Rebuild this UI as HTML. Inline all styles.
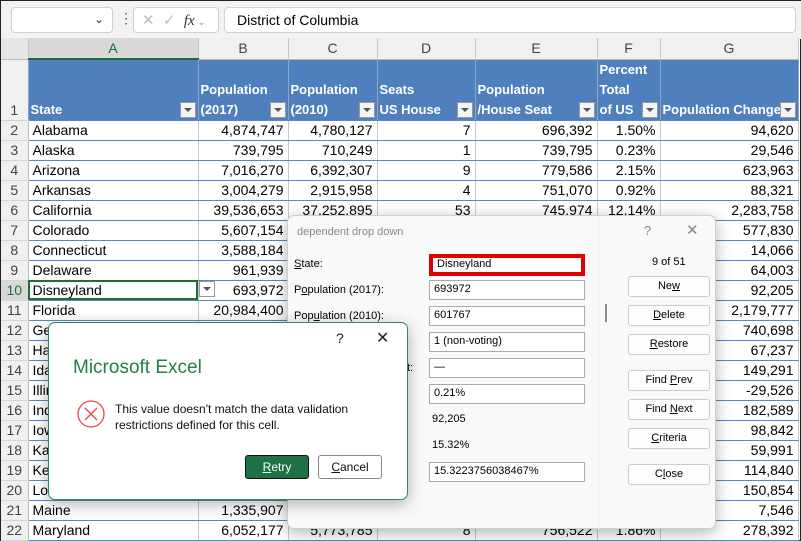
<!DOCTYPE html>
<html><head><meta charset="utf-8"><style>
*{box-sizing:border-box;margin:0;padding:0}
body{width:801px;height:541px;overflow:hidden;background:#fff;font-family:"Liberation Sans",sans-serif;position:relative;border:1px solid #222}
.fb{position:absolute;left:0;top:0;width:801px;height:38px;background:#f3f3f3}
.box{position:absolute;background:#fff;border:1px solid #d0d0d0;border-radius:4px}
table{position:absolute;left:0;top:37px;border-collapse:collapse;table-layout:fixed;font-size:14px}
td{height:20px;padding:0 4px;white-space:nowrap;overflow:hidden;border-right:1px solid #c8c8c8;border-bottom:1px solid #5b86c4;text-align:right;color:#000}
td.n{text-align:center;background:#f0f0f0;color:#444;border-bottom:1px solid #d4d4d4;border-right:1px solid #bbb;padding:0}
td.s{text-align:left}
tr.cl td{height:21px;background:#f0f0f0;color:#444;text-align:center;border-bottom:1px solid #bbb;font-size:14px}
tr.h td{height:59px;background:#4f7fbd;color:#fff;font-weight:bold;text-align:left;vertical-align:bottom;line-height:20px;position:relative;border-right:1px solid #8aa5cc;font-size:13px;padding:0 2px}
tr.h td.n{background:#f0f0f0;color:#444;font-weight:normal;text-align:center;font-size:14px}
.dd{position:absolute;right:2px;bottom:2px;width:16px;height:16px;background:#f4f4f4;border:1px solid #999}
.dd:after{content:"";position:absolute;left:3px;top:5px;border:4px solid transparent;border-top:4px solid #555}
.dlg{position:absolute;background:#fff;border:1px solid #cfcfcf;border-radius:7px;box-shadow:0 4px 16px rgba(0,0,0,.3)}
.lab{position:absolute;font-size:11px;color:#000}
.inp{position:absolute;left:141px;width:156px;height:20px;border:1px solid #aaa;font-size:11px;padding:2px 4px;background:#fff}
.btn{position:absolute;left:340px;width:82px;height:21px;border:1px solid #ccc;border-radius:3px;font-size:11px;text-align:center;line-height:19px;background:#fdfdfd}
u{text-decoration:underline}
</style></head><body>
<div class="fb">
 <div class="box" style="left:10px;top:6px;width:102px;height:26px"><span style="position:absolute;right:8px;top:4px;font-size:12px;color:#333">⌄</span></div>
 <div style="position:absolute;left:118px;top:9px;font-size:14px;color:#555">⋮</div>
 <div class="box" style="left:132px;top:6px;width:86px;height:26px;color:#bbb;font-size:15px;padding:3px 0 0 8px">✕&nbsp;&nbsp;✓&nbsp;&nbsp;<i style="color:#333;font-family:'Liberation Serif',serif">fx</i><span style="font-size:10px;color:#999"> ⌄</span></div>
 <div class="box" style="left:223px;top:6px;width:572px;height:26px;font-size:14px;padding:4px 12px;color:#000">District of Columbia</div>
</div>
<table>
<colgroup><col style="width:27px"><col style="width:170px"><col style="width:90px"><col style="width:89px"><col style="width:98px"><col style="width:122px"><col style="width:63px"><col style="width:138px"></colgroup>
<tr class="cl"><td style="background:#e6e6e6"></td><td style="background:#d8d8d8;color:#1e6e3a;border-bottom:2px solid #1e6e3a">A</td><td>B</td><td>C</td><td>D</td><td>E</td><td>F</td><td>G</td></tr>
<tr class="h"><td class="n">1</td><td>State<span class="dd"></span></td><td>Population<br>(2017)<span class="dd"></span></td><td>Population<br>(2010)<span class="dd"></span></td><td>Seats<br>US House<span class="dd"></span></td><td>Population<br>/House Seat<span class="dd"></span></td><td>Percent<br>Total<br>of US<span class="dd"></span></td><td>Population Change<span class="dd"></span></td></tr>
<tr><td class="n">2</td><td class="s">Alabama</td><td>4,874,747</td><td>4,780,127</td><td>7</td><td>696,392</td><td>1.50%</td><td>94,620</td></tr>
<tr><td class="n">3</td><td class="s">Alaska</td><td>739,795</td><td>710,249</td><td>1</td><td>739,795</td><td>0.23%</td><td>29,546</td></tr>
<tr><td class="n">4</td><td class="s">Arizona</td><td>7,016,270</td><td>6,392,307</td><td>9</td><td>779,586</td><td>2.15%</td><td>623,963</td></tr>
<tr><td class="n">5</td><td class="s">Arkansas</td><td>3,004,279</td><td>2,915,958</td><td>4</td><td>751,070</td><td>0.92%</td><td>88,321</td></tr>
<tr><td class="n">6</td><td class="s">California</td><td>39,536,653</td><td>37,252,895</td><td>53</td><td>745,974</td><td>12.14%</td><td>2,283,758</td></tr>
<tr><td class="n">7</td><td class="s">Colorado</td><td>5,607,154</td><td></td><td></td><td></td><td></td><td>577,830</td></tr>
<tr><td class="n">8</td><td class="s">Connecticut</td><td>3,588,184</td><td></td><td></td><td></td><td></td><td>14,066</td></tr>
<tr><td class="n">9</td><td class="s">Delaware</td><td>961,939</td><td></td><td></td><td></td><td></td><td>64,003</td></tr>
<tr><td class="n" style="background:#d8d8d8;color:#1e6e3a">10</td><td class="s" style="outline:2px solid #1e6e3a;outline-offset:-2px">Disneyland</td><td>693,972</td><td></td><td></td><td></td><td></td><td>92,205</td></tr>
<tr><td class="n">11</td><td class="s">Florida</td><td>20,984,400</td><td></td><td></td><td></td><td></td><td>2,179,777</td></tr>
<tr><td class="n">12</td><td class="s">Georgia</td><td></td><td></td><td></td><td></td><td></td><td>740,698</td></tr>
<tr><td class="n">13</td><td class="s">Hawaii</td><td></td><td></td><td></td><td></td><td></td><td>67,237</td></tr>
<tr><td class="n">14</td><td class="s">Idaho</td><td></td><td></td><td></td><td></td><td></td><td>149,291</td></tr>
<tr><td class="n">15</td><td class="s">Illinois</td><td></td><td></td><td></td><td></td><td></td><td>-29,526</td></tr>
<tr><td class="n">16</td><td class="s">Indiana</td><td></td><td></td><td></td><td></td><td></td><td>182,589</td></tr>
<tr><td class="n">17</td><td class="s">Iowa</td><td></td><td></td><td></td><td></td><td></td><td>98,842</td></tr>
<tr><td class="n">18</td><td class="s">Kansas</td><td></td><td></td><td></td><td></td><td></td><td>59,991</td></tr>
<tr><td class="n">19</td><td class="s">Kentucky</td><td></td><td></td><td></td><td></td><td></td><td>114,840</td></tr>
<tr><td class="n">20</td><td class="s">Louisiana</td><td></td><td></td><td></td><td></td><td></td><td>150,854</td></tr>
<tr><td class="n">21</td><td class="s">Maine</td><td>1,335,907</td><td></td><td></td><td></td><td></td><td>7,546</td></tr>
<tr><td class="n">22</td><td class="s">Maryland</td><td>6,052,177</td><td>5,773,785</td><td>8</td><td>756,522</td><td>1.86%</td><td>278,392</td></tr>
</table>
<div class="dd" style="left:198px;top:280px;right:auto;bottom:auto;background:#fff"></div>

<div class="dlg" style="left:286px;top:214px;width:429px;height:314px;background:#f9f9f9">
 <div style="position:absolute;left:9px;top:10px;font-size:11px;color:#888">dependent drop down</div>
 <div style="position:absolute;left:356px;top:7px;font-size:13px;color:#888">?</div>
 <div style="position:absolute;left:398px;top:5px;font-size:15px;color:#888">✕</div>
 <div class="lab" style="left:6px;top:42px"><u>S</u>tate:</div>
 <div class="lab" style="left:6px;top:68px">P<u>o</u>pulation (2017):</div>
 <div class="lab" style="left:6px;top:94px">Pop<u>u</u>lation (2010):</div>
 <div class="lab" style="left:119px;top:146px">t:</div>
 <div class="inp" style="top:38px;border:4px solid #e00000;height:22px;padding:0 4px">Disneyland</div>
 <div class="inp" style="top:64px">693972</div>
 <div class="inp" style="top:90px">601767</div>
 <div class="inp" style="top:116px">1 (non-voting)</div>
 <div class="inp" style="top:142px">—</div>
 <div class="inp" style="top:168px">0.21%</div>
 <div class="lab" style="left:144px;top:197px">92,205</div>
 <div class="lab" style="left:144px;top:223px">15.32%</div>
 <div class="inp" style="top:246px">15.3223756038467%</div>
 <div style="position:absolute;left:317px;top:88px;width:2px;height:18px;background:#888"></div>
 <div style="position:absolute;left:310px;top:0;width:1px;height:314px;background:#eee"></div>
 <div class="lab" style="left:364px;top:40px">9 of 51</div>
 <div class="btn" style="top:60px">Ne<u>w</u></div>
 <div class="btn" style="top:89px"><u>D</u>elete</div>
 <div class="btn" style="top:118px"><u>R</u>estore</div>
 <div class="btn" style="top:154px">Find <u>P</u>rev</div>
 <div class="btn" style="top:183px">Find <u>N</u>ext</div>
 <div class="btn" style="top:212px"><u>C</u>riteria</div>
 <div class="btn" style="top:248px">C<u>l</u>ose</div>
</div>

<div class="dlg" style="left:47px;top:321px;width:360px;height:178px;border:1px solid #2e8b57">
 <div style="position:absolute;left:287px;top:7px;font-size:14px;color:#222">?</div>
 <div style="position:absolute;left:327px;top:5px;font-size:16px;color:#222">✕</div>
 <div style="position:absolute;left:24px;top:34px;font-size:19px;color:#1f8049">Microsoft Excel</div>
 <svg style="position:absolute;left:27px;top:76px" width="30" height="30" viewBox="0 0 30 30"><circle cx="15" cy="15" r="13" fill="none" stroke="#e84a4a" stroke-width="1.3"/><path d="M9 9L21 21M21 9L9 21" stroke="#e84a4a" stroke-width="1.3"/></svg>
 <div style="position:absolute;left:66px;top:78px;font-size:12px;line-height:16px;color:#111">This value doesn't match the data validation<br>restrictions defined for this cell.</div>
 <div style="position:absolute;left:196px;top:132px;width:64px;height:24px;background:#1e7145;border:1px solid #111;border-radius:3px;color:#fff;font-size:12px;text-align:center;line-height:22px"><u>R</u>etry</div>
 <div style="position:absolute;left:269px;top:132px;width:64px;height:24px;background:#fff;border:1px solid #888;border-radius:3px;color:#111;font-size:12px;text-align:center;line-height:22px"><u>C</u>ancel</div>
</div>
</body></html>
